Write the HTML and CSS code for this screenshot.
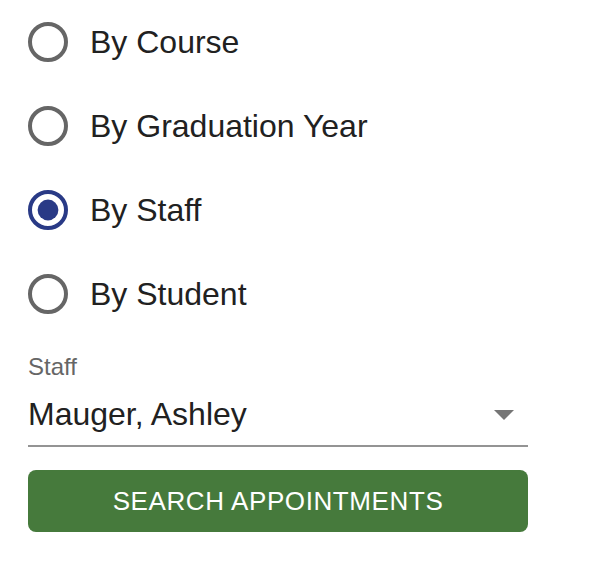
FILE: index.html
```html
<!DOCTYPE html>
<html lang="en">
<head>
  <meta charset="UTF-8">
  <meta name="viewport" content="width=device-width, initial-scale=1.0">
  <title>Search Appointments</title>
  <link rel="stylesheet" href="styles.css">
</head>
<body>
  <form class="search-form">
    <div class="radio-group">
      <label class="option">
        <span class="radio">
          <svg viewBox="0 0 24 24"><circle cx="12" cy="12" r="9" /></svg>
        </span>
        <span class="option-text">By Course</span>
      </label>
      <label class="option">
        <span class="radio">
          <svg viewBox="0 0 24 24"><circle cx="12" cy="12" r="9" /></svg>
        </span>
        <span class="option-text">By Graduation Year</span>
      </label>
      <label class="option checked">
        <span class="radio">
          <svg viewBox="0 0 24 24"><circle cx="12" cy="12" r="9" /><circle class="dot" cx="12" cy="12" r="5.2" /></svg>
        </span>
        <span class="option-text">By Staff</span>
      </label>
      <label class="option">
        <span class="radio">
          <svg viewBox="0 0 24 24"><circle cx="12" cy="12" r="9" /></svg>
        </span>
        <span class="option-text">By Student</span>
      </label>
    </div>

    <!-- Select staff -->
    <div class="select-field">
      <div class="select-label">Staff</div>
      <div class="select-row">
        <span class="select-value">Mauger, Ashley</span>
        <svg class="select-arrow" viewBox="0 0 24 24"><path d="M7 10l5 5 5-5z" /></svg>
      </div>
    </div>

    <button type="button" class="search-btn">SEARCH APPOINTMENTS</button>
  </form>
</body>
</html>
```

FILE: styles.css
```css
/* Reset */
* {
  margin: 0;
  padding: 0;
  box-sizing: border-box;
}

body {
  font-family: "Liberation Sans", Arial, sans-serif;
  background-color: #fff;
  color: #212121;
}

.search-form {
  width: 500px;
  margin-left: 28px;
}

/* Radio buttons */
.radio-group {
  display: flex;
  flex-direction: column;
}

.option {
  display: flex;
  align-items: center;
  height: 84px;
  margin-left: -22px;
  cursor: pointer;
}

.radio {
  display: flex;
  padding: 18px;
}

.radio svg {
  width: 48px;
  height: 48px;
}

.radio circle {
  fill: none;
  stroke: #666;
  stroke-width: 2;
}

.option.checked .radio circle {
  stroke: #293a86;
}

.option.checked .radio .dot {
  fill: #293a86;
  stroke: none;
}

.option-text {
  font-size: 32px;
  line-height: 46px;
}

/* Select */
.select-field {
  margin-top: 16px;
}

.select-label {
  font-size: 24px;
  line-height: 30px;
  height: 30px;
  color: #666;
}

.select-row {
  display: flex;
  height: 65px;
  padding: 9px 0 8px;
  border-bottom: 2px solid #949494;
}

.select-value {
  flex: 1;
  font-size: 32px;
  line-height: 46px;
}

.select-arrow {
  width: 48px;
  height: 48px;
  margin: -1px 0;
  fill: #757575;
}

/* Button */
.search-btn {
  display: block;
  width: 100%;
  height: 62px;
  margin-top: 23px;
  border: none;
  border-radius: 8px;
  background-color: #467a3c;
  color: #fff;
  font-family: inherit;
  font-size: 26px;
  letter-spacing: 0.6px;
  cursor: pointer;
}
```
